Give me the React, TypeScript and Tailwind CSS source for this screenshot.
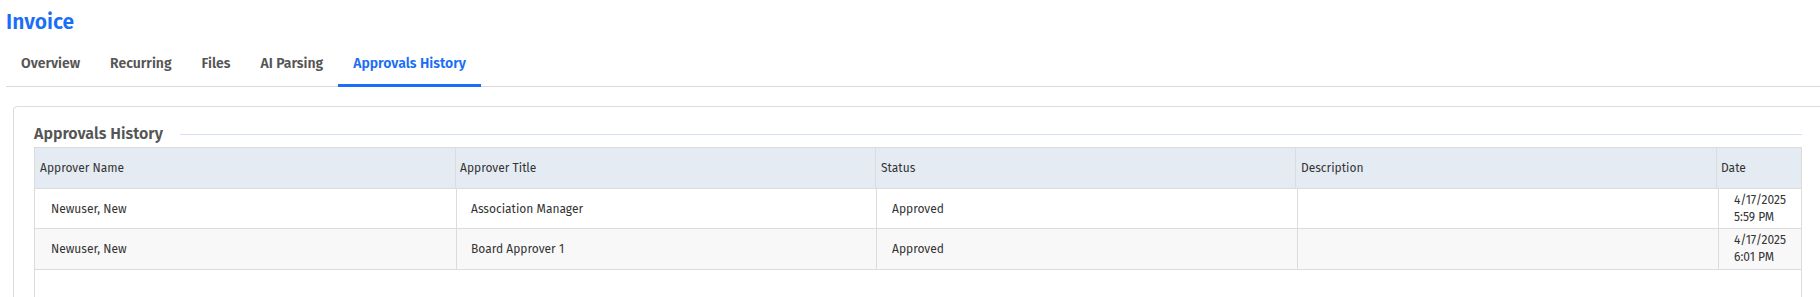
const rows = [
  { name: "Newuser, New", title: "Association Manager", status: "Approved", description: "", date: "4/17/2025", time: "5:59 PM" },
  { name: "Newuser, New", title: "Board Approver 1", status: "Approved", description: "", date: "4/17/2025", time: "6:01 PM" },
];

const tabs = ["Overview", "Recurring", "Files", "AI Parsing", "Approvals History"];

export default function App() {
  return (
    <div
      className="h-[297px] w-full overflow-hidden bg-white pl-[6px]"
      style={{ fontFamily: '"Fira Sans", "Open Sans", sans-serif' }}
    >
      <h1 className="pt-[9px] text-[21px] leading-[26px] font-semibold text-[#1a6ef5]">Invoice</h1>

      {/* tab strip */}
      <div className="mt-[12px] flex border-b border-[#dadada]">
        {tabs.map((t) => {
          const active = t === "Approvals History";
          return (
            <div
              key={t}
              className={
                active
                  ? "-mb-px border-b-[3px] border-[#1a6ef5] px-[15px] pt-[8px] pb-[11px] text-[14px] leading-[18px] font-semibold text-[#1a6ef5]"
                  : "-mb-px border-b-[3px] border-transparent px-[15px] pt-[8px] pb-[11px] text-[14px] leading-[18px] font-semibold text-[#555555]"
              }
            >
              {t}
            </div>
          );
        })}
      </div>

      {/* card */}
      <div className="mt-[19px] ml-[7px] w-[1810px] rounded-tl-[4px] border border-[#dcdcdc] px-[20px] pt-[16px] pb-[20px]">
        <div className="flex items-center gap-[17px]">
          <h2 className="text-[16px] leading-[22px] font-semibold text-[#555555]">Approvals History</h2>
          <div className="h-px flex-1 bg-[#d6e0f5]" />
        </div>

        <div className="mt-[2px] min-h-[200px] border border-[#dcdcdc] text-[12px] text-[#333333]">
          <div className="grid h-[41px] grid-cols-[421px_420px_420px_421px_1fr] border-b border-[#dcdcdc] bg-[#e5ebf3]">
            <div className="flex items-center border-r border-[#dcdcdc] pl-[5px]">Approver Name</div>
            <div className="flex items-center border-r border-[#dcdcdc] pl-[4px]">Approver Title</div>
            <div className="flex items-center border-r border-[#dcdcdc] pl-[5px]">Status</div>
            <div className="flex items-center border-r border-[#dcdcdc] pl-[5px]">Description</div>
            <div className="flex items-center pl-[4px]">Date</div>
          </div>
          {rows.map((r, i) => (
            <div
              key={i}
              className={
                i % 2 === 1
                  ? "grid h-[41px] grid-cols-[422px_420px_421px_421px_1fr] border-b border-[#dcdcdc] bg-[#f8f8f8]"
                  : "grid h-[40px] grid-cols-[422px_420px_421px_421px_1fr] border-b border-[#dcdcdc] bg-white"
              }
            >
              <div className="flex items-center border-r border-[#dcdcdc] pl-[16px]">{r.name}</div>
              <div className="flex items-center border-r border-[#dcdcdc] pl-[14px]">{r.title}</div>
              <div className="flex items-center border-r border-[#dcdcdc] pl-[15px]">{r.status}</div>
              <div className="flex items-center border-r border-[#dcdcdc] pl-[15px]">{r.description}</div>
              <div className="flex flex-col justify-center pl-[15px] leading-[17px]">
                <span>{r.date}</span>
                <span>{r.time}</span>
              </div>
            </div>
          ))}
        </div>
      </div>
    </div>
  );
}
